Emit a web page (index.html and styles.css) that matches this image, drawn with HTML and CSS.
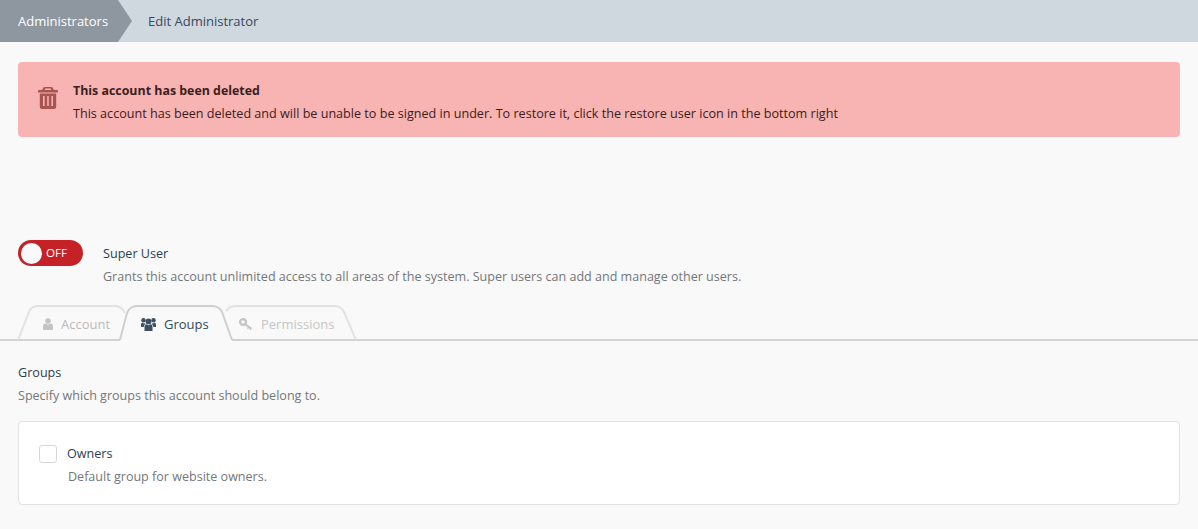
FILE: index.html
```html
<!DOCTYPE html>
<html lang="en">
<head>
<meta charset="utf-8">
<title>Edit Administrator</title>
<link rel="stylesheet" href="styles.css">
</head>
<body>
<nav class="crumbs">
  <a class="crumb-parent">Administrators</a>
  <span class="crumb-current">Edit Administrator</span>
</nav>
<main class="content">
  <section class="alert">
    <svg class="alert-icon" viewBox="0 0 20 22" width="20" height="22"><path fill="#a85450" fill-rule="evenodd" d="M7 0h6q1.500 0 2 1.200L15.800 3H19a1 1 0 0 1 1 1V5.500H0V4a1 1 0 0 1 1-1h3.200L5 1.200Q5.500 0 7 0zM7.300 1.500 6.700 3h6.600l-.6-1.500zM1.800 6.500h16.400V19.500a2.500 2.500 0 0 1-2.500 2.500H4.300a2.500 2.500 0 0 1-2.500-2.500zM5 9v10h1.600V9zM9.200 9v10h1.600V9zM13.400 9v10h1.600V9z"/></svg>
    <div>
      <h2 class="alert-title">This account has been deleted</h2>
      <p class="alert-text">This account has been deleted and will be unable to be signed in under. To restore it, click the restore user icon in the bottom right</p>
    </div>
  </section>
  <section class="super">
    <div class="switch"><span class="knob"></span><span class="switch-label">OFF</span></div>
    <div class="super-text">
      <div class="label">Super User</div>
      <div class="help">Grants this account unlimited access to all areas of the system. Super users can add and manage other users.</div>
    </div>
  </section>
</main>
<div class="tabs">
  <svg class="tab-shapes" viewBox="0 0 1198 38" width="1198" height="38">
    <path class="tab-line" d="M0 36H120M232 36H1198"/>
    <path class="tab-off" d="M18 36 29 8Q31 2 38 2H114Q120 2 123 6L125 9"/>
    <path class="tab-off" d="M226 7 229 4Q231 2 236 2H335Q341 2 344 8L356 36"/>
    <path class="tab-on" d="M120 36 127 9Q130 2 137 2H212Q219 2 222 8L232 36"/>
  </svg>
  <div class="tab tab-account">
    <svg class="tab-icon" viewBox="0 0 10 12" width="10" height="12"><circle cx="5" cy="3" r="2.800" fill="#c4c4c4"/><path fill="#c4c4c4" d="M0 12V8Q0 5.800 2.200 5.600L5 6.800 7.800 5.600Q10 5.800 10 8V12z"/></svg>
    Account
  </div>
  <div class="tab tab-groups">
    <svg class="tab-icon" viewBox="0 0 15 13" width="15" height="13"><g fill="#3d4f60"><circle cx="7.500" cy="3.400" r="2.900"/><circle cx="2.500" cy="2.300" r="2.200"/><circle cx="12.500" cy="2.300" r="2.200"/><path d="M3.500 13V8.600Q3.500 6.500 5.300 6.200L7.500 7.200 9.700 6.200Q11.500 6.500 11.500 8.600V13z"/><path d="M0 9V6.500Q0 4.900 1.400 4.800L3 5.400 3.900 5.200Q4 5.900 4.700 6.100Q2.700 6.700 2.700 9z"/><path d="M15 9V6.500Q15 4.900 13.600 4.800L12 5.400 11.100 5.200Q11 5.900 10.300 6.100Q12.300 6.700 12.300 9z"/></g></svg>
    Groups
  </div>
  <div class="tab tab-perms">
    <svg class="tab-icon" viewBox="0 0 14 13" width="14" height="13"><circle class="key-ring" cx="4" cy="4" r="2.900"/><path class="key-shaft" d="M6.300 6.200 12.500 10.800"/><path class="key-tooth" d="M9.500 9.300 8.600 10.800M12 10.400 11 12"/></svg>
    Permissions
  </div>
</div>
<section class="groups">
  <div class="label">Groups</div>
  <div class="help">Specify which groups this account should belong to.</div>
  <div class="card">
    <div class="check-row"><span class="checkbox"></span><span class="label">Owners</span></div>
    <div class="help card-help">Default group for website owners.</div>
  </div>
</section>
</body>
</html>
```
FILE: styles.css
```css
* { box-sizing: border-box; }
html, body { margin: 0; padding: 0; }
body {
  width: 1198px;
  height: 529px;
  overflow: hidden;
  background: #f9f9f9;
  font-family: "Open Sans", "Noto Sans", sans-serif;
  font-size: 12.6px;
  line-height: 23px;
  color: #2b3e50;
}
.crumbs {
  display: flex;
  height: 42px;
  background: #d0d8df;
  align-items: center;
  font-size: 13px;
}
.crumb-parent {
  height: 42px;
  width: 132px;
  padding-left: 18px;
  line-height: 42px;
  color: #fff;
  background: #8e979f;
  clip-path: polygon(0 0, 118px 0, 132px 21px, 118px 42px, 0 42px);
}
.crumb-current { margin-left: 16px; color: #34495e; }
.content { padding: 20px 18px 0; }
.alert {
  display: flex;
  align-items: center;
  height: 75px;
  padding: 4px 20px 0;
  gap: 15px;
  background: #f7b4b2;
  border-radius: 4px;
  color: #3c2020;
}
.alert-icon { margin-bottom: 7px; }
.alert-title { margin: 0; font-size: 12.4px; font-weight: 700; line-height: 23px; }
.alert-text { margin: 0; }
.super { display: flex; gap: 20px; margin-top: 103px; }
.super-text { padding-top: 2px; }
.switch {
  position: relative;
  width: 65px;
  height: 26px;
  border-radius: 13px;
  background: #c42226;
  color: #fff;
  font-size: 11.6px;
  line-height: 26px;
  padding-left: 28px;
}
.knob {
  position: absolute;
  left: 3px;
  top: 2.5px;
  width: 21px;
  height: 21px;
  border-radius: 50%;
  background: #f9f9f9;
}
.label { color: #2b3e50; }
.help { color: #73777a; font-size: 12.55px; }
.tabs {
  position: relative;
  display: flex;
  height: 38px;
  margin-top: 16px;
}
.tab-shapes { position: absolute; left: 0; top: 0; }
.tab-shapes path { fill: none; stroke-width: 2; }
.tab-line { stroke: #d2d2d2; }
.tab-off { stroke: #e2e2e2; }
.tab-on { stroke: #d0d0d0; }
.tab {
  position: relative;
  display: flex;
  align-items: center;
  gap: 8px;
  width: 98px;
  height: 40px;
  font-size: 13px;
  color: #b9b9b9;
}
.tab-account { margin-left: 43px; }
.tab-groups { color: #34495e; }
.tab-perms { color: #c6c6c6; }
.key-ring, .key-shaft, .key-tooth { fill: none; stroke: #c4c4c4; }
.key-ring { stroke-width: 2.200; }
.key-shaft { stroke-width: 2; }
.key-tooth { stroke-width: 1.400; }
.groups { padding: 19px 18px 0; }
.card {
  margin-top: 14px;
  height: 84px;
  padding: 20px;
  background: #fff;
  border: 1px solid #e3e3e3;
  border-radius: 4px;
}
.check-row { display: flex; align-items: center; gap: 10px; height: 23px; }
.checkbox {
  width: 18px;
  height: 18px;
  background: #fff;
  border: 1px solid #d6d6d6;
  border-radius: 3px;
}
.card-help { margin-left: 29px; }
```
